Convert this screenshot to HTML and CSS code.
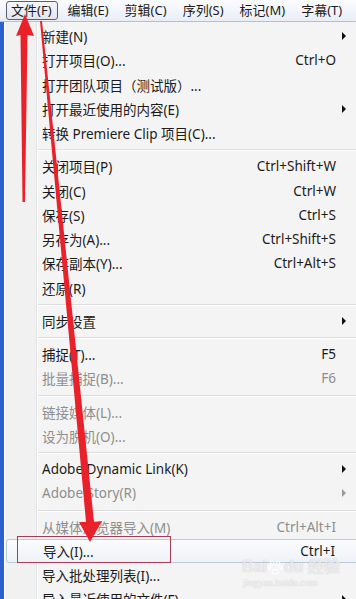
FILE: index.html
```html
<!DOCTYPE html>
<html lang="zh-CN">
<head>
  <meta charset="UTF-8">
  <meta name="viewport" content="width=device-width, initial-scale=1.0">
  <title>文件菜单</title>
  <link rel="stylesheet" href="styles.css">
</head>
<body>
  <div class="menubar">
    <span class="bar-item open">文件(F)</span>
    <span class="bar-item">编辑(E)</span>
    <span class="bar-item">剪辑(C)</span>
    <span class="bar-item">序列(S)</span>
    <span class="bar-item">标记(M)</span>
    <span class="bar-item">字幕(T)</span>
  </div>

  <div class="menu">
    <div class="row"><span class="label">新建(N)</span><span class="key"></span><span class="sub"></span></div>
    <div class="row"><span class="label">打开项目(O)...</span><span class="key">Ctrl+O</span><span></span></div>
    <div class="row"><span class="label">打开团队项目（测试版）...</span><span class="key"></span><span></span></div>
    <div class="row"><span class="label">打开最近使用的内容(E)</span><span class="key"></span><span class="sub"></span></div>
    <div class="row"><span class="label">转换 Premiere Clip 项目(C)...</span><span class="key"></span><span></span></div>
    <div class="sep"></div>
    <div class="row"><span class="label">关闭项目(P)</span><span class="key">Ctrl+Shift+W</span><span></span></div>
    <div class="row"><span class="label">关闭(C)</span><span class="key">Ctrl+W</span><span></span></div>
    <div class="row"><span class="label">保存(S)</span><span class="key">Ctrl+S</span><span></span></div>
    <div class="row"><span class="label">另存为(A)...</span><span class="key">Ctrl+Shift+S</span><span></span></div>
    <div class="row"><span class="label">保存副本(Y)...</span><span class="key">Ctrl+Alt+S</span><span></span></div>
    <div class="row"><span class="label">还原(R)</span><span class="key"></span><span></span></div>
    <div class="sep"></div>
    <div class="row"><span class="label">同步设置</span><span class="key"></span><span class="sub"></span></div>
    <div class="sep"></div>
    <div class="row"><span class="label">捕捉(T)...</span><span class="key">F5</span><span></span></div>
    <div class="row off"><span class="label">批量捕捉(B)...</span><span class="key">F6</span><span></span></div>
    <div class="sep"></div>
    <div class="row off"><span class="label">链接媒体(L)...</span><span class="key"></span><span></span></div>
    <div class="row off"><span class="label">设为脱机(O)...</span><span class="key"></span><span></span></div>
    <div class="sep"></div>
    <div class="row"><span class="label">Adobe Dynamic Link(K)</span><span class="key"></span><span class="sub"></span></div>
    <div class="row off"><span class="label">Adobe Story(R)</span><span class="key"></span><span class="sub"></span></div>
    <div class="sep"></div>
    <div class="row off"><span class="label">从媒体浏览器导入(M)</span><span class="key">Ctrl+Alt+I</span><span></span></div>
    <div class="row hover"><span class="label">导入(I)...</span><span class="key">Ctrl+I</span><span></span></div>
    <div class="row"><span class="label">导入批处理列表(I)...</span><span class="key"></span><span></span></div>
    <div class="row"><span class="label">导入最近使用的文件(F)</span><span class="key"></span><span class="sub"></span></div>
  </div>

  <!-- annotations drawn over the screenshot -->
  <div class="mark-box"></div>
  <svg class="arrows" width="356" height="599" viewBox="0 0 356 599">
    <polygon points="25,14 34,36 27.5,35 25,202 22.5,202 20.5,35 16,36" fill="#e8212b"/>
    <polygon points="40,21 42,21 94,522 102,521 90,542 79,522 86,522" fill="#e8212b"/>
  </svg>

  <div class="watermark">
    <div class="wm-logo">Bai<svg class="paw" width="15" height="15" viewBox="0 0 18 18">
        <g fill="none" stroke="rgba(255,255,255,0.85)" stroke-width="1.4">
          <ellipse cx="5" cy="4" rx="2" ry="2.6"/>
          <ellipse cx="12" cy="4" rx="2" ry="2.6"/>
          <ellipse cx="2" cy="9" rx="1.6" ry="2.2"/>
          <ellipse cx="15.5" cy="9" rx="1.6" ry="2.2"/>
          <path d="M5 15 C5 10 12 10 13 15 C13 17 5 17 5 15 Z"/>
        </g>
      </svg>du 经验</div>
    <div class="wm-url">jingyan.baidu.com</div>
  </div>
</body>
</html>
```

FILE: styles.css
```css
body {
  margin: 0;
  width: 356px;
  height: 599px;
  overflow: hidden;
  position: relative;
  background: #2c5fcf;
  font-family: "Noto Sans", "Noto Sans CJK SC", sans-serif;
  font-size: 13.5px;
  color: #1b1b1b;
}
.menubar {
  height: 21px;
  display: flex;
  align-items: center;
  gap: 5px;
  padding-left: 6px;
  background: linear-gradient(#fbfcfe, #e9eef6);
  border-bottom: 1px solid #b9bec7;
  white-space: nowrap;
  font-size: 13px;
}
.bar-item {
  height: 17px;
  line-height: 17px;
  padding: 0 5px 0 4px;
  border: 1px solid transparent;
}
.bar-item.open {
  border-color: #5a5f66;
  border-radius: 3px;
  background: linear-gradient(#f4f6f9, #e2e6ec);
}
.menu {
  margin-left: 4px;
  width: 372px;
  padding-top: 2px;
  border-left: 1px solid #ffffff;
  background: linear-gradient(to right, #f1f1f1 31px, #e1e2e3 31px, #e1e2e3 32px, #ffffff 32px, #ffffff 33px, #f4f4f4 33px);
}
.row {
  height: 24.25px;
  display: grid;
  grid-template-columns: 1fr auto 41px;
  align-items: center;
  padding-left: 37px;
  white-space: nowrap;
  box-sizing: border-box;
}
.row.off {
  color: #8e8e8e;
}
.row.hover {
  margin-left: 1px;
  margin-right: 2px;
  padding-left: 36px;
  grid-template-columns: 1fr auto 39px;
  border: 1px solid #bccbdc;
  border-radius: 3px;
  background: linear-gradient(#fbfcfe, #eef2f7);
}
.key {
  text-align: right;
}
.sub {
  width: 0;
  height: 0;
  margin-left: 6px;
  border-top: 4px solid transparent;
  border-bottom: 4px solid transparent;
  border-left: 4px solid #111111;
}
.row.off .sub {
  border-left-color: #9a9a9a;
}
.sep {
  height: 9px;
  margin-left: 33px;
  background: linear-gradient(#f4f4f4 4px, #dcdcdc 4px, #dcdcdc 5px, #ffffff 5px, #ffffff 6px, #f4f4f4 6px);
}
.mark-box {
  position: absolute;
  left: 17px;
  top: 536px;
  width: 152px;
  height: 25px;
  border: 1px solid #a83a55;
}
.arrows {
  position: absolute;
  left: 0;
  top: 0;
}
.watermark {
  position: absolute;
  left: 242px;
  top: 558px;
  white-space: nowrap;
  color: rgba(255, 255, 255, 0.7);
  text-shadow: 0 0 1px rgba(140, 140, 140, 0.55);
}
.wm-logo {
  display: flex;
  align-items: center;
  font-family: "Liberation Sans", "Noto Sans CJK SC", sans-serif;
  font-size: 16px;
  font-weight: bold;
  line-height: 18px;
}
.paw {
  margin: 0 1px;
}
.wm-url {
  font-family: "Liberation Serif", serif;
  font-size: 10px;
  line-height: 14px;
  padding-left: 1px;
}
```
